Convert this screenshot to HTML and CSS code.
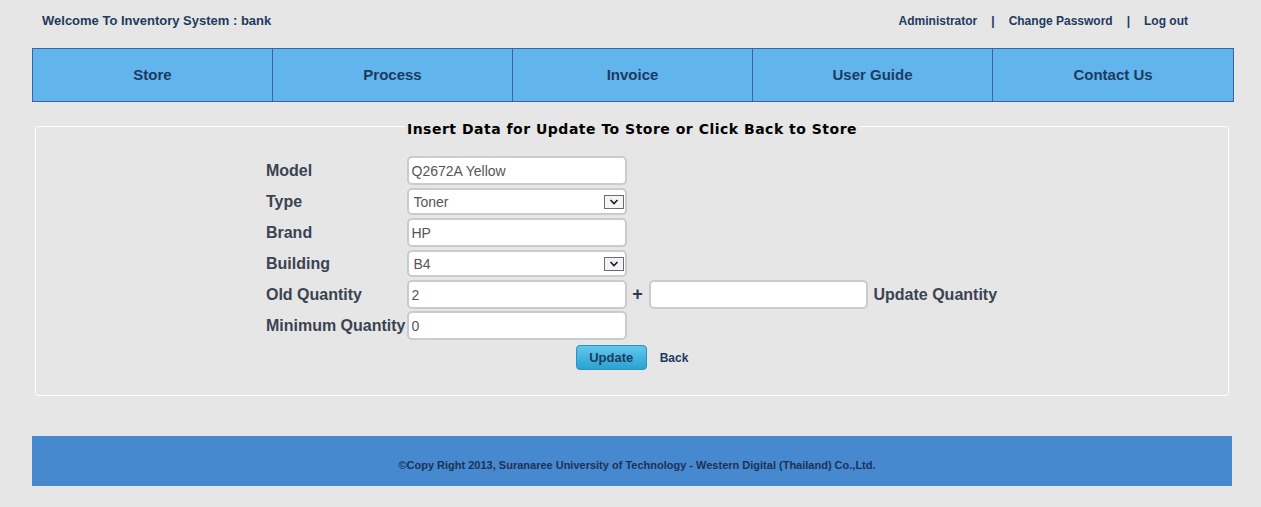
FILE: index.html
```html
<!DOCTYPE html>
<html>
<head>
<meta charset="utf-8">
<title>Inventory System</title>
<link rel="stylesheet" href="styles.css">
</head>
<body>
<div class="page">
  <div class="topbar">
    <div class="welcome">Welcome To Inventory System : bank</div>
    <div class="userlinks">
      <a href="#">Administrator</a><span class="sep">|</span><a href="#">Change Password</a><span class="sep">|</span><a href="#">Log out</a>
    </div>
  </div>
  <nav class="menu">
    <a href="#" class="menu-item">Store</a>
    <a href="#" class="menu-item">Process</a>
    <a href="#" class="menu-item">Invoice</a>
    <a href="#" class="menu-item">User Guide</a>
    <a href="#" class="menu-item">Contact Us</a>
  </nav>
  <fieldset class="panel">
    <legend class="panel-title">Insert Data for Update To Store or Click Back to Store</legend>
    <table class="form">
      <tr>
        <td class="lbl">Model</td>
        <td><input class="field" type="text" value="Q2672A Yellow"></td>
        <td></td><td></td><td></td>
      </tr>
      <tr>
        <td class="lbl">Type</td>
        <td><div class="selwrap"><select class="field sel"><option>Toner</option></select><svg class="arrow" width="20" height="14" viewBox="0 0 20 14"><rect x="0.5" y="0.5" width="19" height="13" fill="#f4f4f4" stroke="#6d6d6d"/><path d="M6.5 5 L10 8.5 L13.5 5" fill="none" stroke="#1a1a2e" stroke-width="1.6"/></svg></div></td>
        <td></td><td></td><td></td>
      </tr>
      <tr>
        <td class="lbl">Brand</td>
        <td><input class="field" type="text" value="HP"></td>
        <td></td><td></td><td></td>
      </tr>
      <tr>
        <td class="lbl">Building</td>
        <td><div class="selwrap"><select class="field sel"><option>B4</option></select><svg class="arrow" width="20" height="14" viewBox="0 0 20 14"><rect x="0.5" y="0.5" width="19" height="13" fill="#f4f4f4" stroke="#6d6d6d"/><path d="M6.5 5 L10 8.5 L13.5 5" fill="none" stroke="#1a1a2e" stroke-width="1.6"/></svg></div></td>
        <td></td><td></td><td></td>
      </tr>
      <tr>
        <td class="lbl">Old Quantity</td>
        <td><input class="field" type="text" value="2"></td>
        <td class="plus">+</td>
        <td><input class="field field-wide" type="text" value=""></td>
        <td class="lbl lbl-after">Update Quantity</td>
      </tr>
      <tr>
        <td class="lbl">Minimum Quantity</td>
        <td><input class="field" type="text" value="0"></td>
        <td></td><td></td><td></td>
      </tr>
      <tr>
        <td colspan="5" class="actions">
          <button class="btn" type="button">Update</button><a href="#" class="back">Back</a>
        </td>
      </tr>
    </table>
  </fieldset>
  <footer class="footer">©Copy Right 2013, Suranaree University of Technology - Western Digital (Thailand) Co.,Ltd.</footer>
</div>
</body>
</html>
```
FILE: styles.css
```css
html, body {
  margin: 0;
  padding: 0;
}
body {
  background: #e6e6e6;
  font-family: "Liberation Sans", Arial, sans-serif;
  color: #1e3a60;
}
a {
  text-decoration: none;
  color: #1e3a60;
}
.page {
  width: 1202px;
  margin-left: 32px;
}
.topbar {
  display: flex;
  justify-content: space-between;
  align-items: center;
  height: 48px;
  padding: 0 46px 7px 10px;
  box-sizing: border-box;
  font-size: 12px;
  font-weight: bold;
}
.welcome {
  color: #1e3a60;
  font-size: 13px;
}
.userlinks {
  display: flex;
}
.sep {
  margin: 0 14px;
}
.menu {
  display: grid;
  grid-template-columns: repeat(5, 1fr);
  height: 54px;
  border: 1px solid #3565a8;
  box-sizing: border-box;
  background: #62b5ec;
}
.menu-item {
  display: flex;
  align-items: center;
  justify-content: center;
  padding-bottom: 2px;
  font-size: 15px;
  font-weight: bold;
  color: #1d3a62;
  border-right: 1px solid #3565a8;
}
.menu-item:last-child {
  border-right: none;
}
.panel {
  margin: 13px 5px 40px 3px;
  padding: 18px 0 24px;
  border: 1px solid #ffffff;
  border-radius: 3px;
}
.panel-title {
  margin: 0 auto;
  padding: 6px 2px 0;
  font-family: "DejaVu Sans", Verdana, sans-serif;
  font-size: 14px;
  letter-spacing: 0.5px;
  font-weight: bold;
  color: #000;
}
.form {
  margin: 0 auto;
  border-collapse: collapse;
}
.form td {
  padding: 1px 0;
  vertical-align: middle;
}
.lbl {
  font-size: 16px;
  font-weight: bold;
  color: #3b4351;
  padding-right: 1px !important;
  white-space: nowrap;
}
.lbl-after {
  padding-left: 6px !important;
}
.field {
  display: block;
  width: 220px;
  height: 29px;
  box-sizing: border-box;
  border: 2px solid #c9cbce;
  border-radius: 5px;
  background: #fff;
  padding: 0 3px;
  font-family: "Liberation Sans", Arial, sans-serif;
  font-size: 14px;
  color: #555;
  margin: 0;
  outline: none;
}
.field-wide {
  width: 219px;
}
.selwrap {
  position: relative;
}
.sel {
  appearance: none;
  -webkit-appearance: none;
  height: 27px;
  margin: 1px 0;
  padding-left: 5px;
}
.arrow {
  position: absolute;
  right: 3px;
  top: 7px;
}
.plus {
  width: 22px;
  text-align: center;
  font-size: 18px;
  font-weight: bold;
  color: #2a3a5a;
}
.actions {
  text-align: center;
  padding-top: 4px !important;
}
.btn {
  width: 71px;
  height: 25px;
  border: 1px solid #2a92c2;
  border-radius: 4px;
  background: linear-gradient(#62c8ec, #2aa2d2);
  font-family: "Liberation Sans", Arial, sans-serif;
  font-size: 13px;
  font-weight: bold;
  color: #1e3a60;
  vertical-align: middle;
  padding: 0;
}
.back {
  display: inline-block;
  margin-left: 13px;
  font-size: 12px;
  font-weight: bold;
  vertical-align: middle;
}
.footer {
  width: 1200px;
  height: 50px;
  box-sizing: border-box;
  padding: 23px 0 0 10px;
  background: #4689cf;
  text-align: center;
  font-size: 11px;
  font-weight: bold;
  color: #1e3158;
}
```
